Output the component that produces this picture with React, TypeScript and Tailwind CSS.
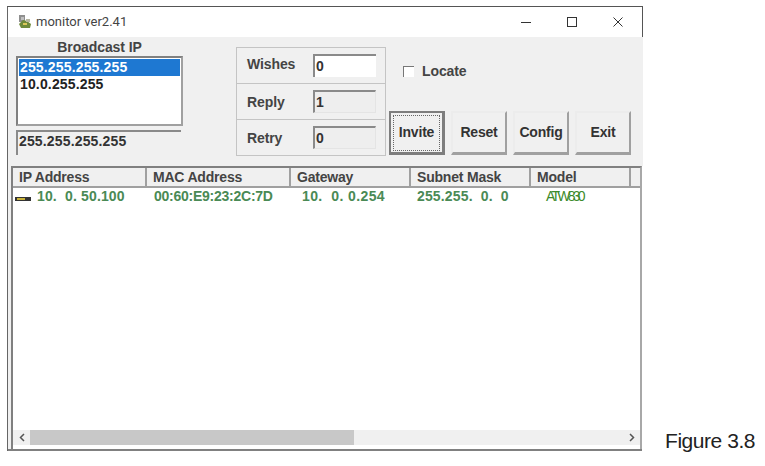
const F = "font-['Liberation_Sans',sans-serif]";

function Btn({ label, def }: { label: string; def?: boolean }) {
  return (
    <div className={`w-[56px] h-[44px] flex items-center justify-center bg-[#f0f0f0] text-[14px] tracking-[-0.2px] font-bold text-[#333] ${def ? "border-2 border-[#7d7d7d] border-b-[3px] border-r-[3px]" : "border-t-2 border-l-2 border-t-[#ececec] border-l-[#ececec] border-r-2 border-b-[3px] border-r-[#a0a0a0] border-b-[#a0a0a0]"}`}>
      {def ? <div className="w-[47px] h-[36px] flex items-center justify-center border border-dotted border-[#666]">{label}</div> : label}
    </div>
  );
}

function Row({ label, value, white, h, lab }: { label: string; value: string; white?: boolean; h: string; lab: string }) {
  return (
    <div className={`${h} flex items-center pl-[10px] border-b border-[#c4c4c4] last:border-b-0`}>
      <div className={`w-[66px] text-[14px] font-bold text-[#444] tracking-[-0.1px] ${lab}`}>{label}</div>
      <div className={`w-[63px] h-[23px] flex items-center border-t-2 border-l-2 border-t-[#8a8a8a] border-l-[#8a8a8a] text-[14px] font-bold text-[#333] pl-[1px] ${white ? "bg-white" : "bg-[#eeeeee] border-r border-b border-r-[#e4e4e4] border-b-[#e4e4e4]"}`}>
        {value}
      </div>
    </div>
  );
}

const cols = [
  { t: "IP Address", w: 134 },
  { t: "MAC Address", w: 144 },
  { t: "Gateway", w: 120 },
  { t: "Subnet Mask", w: 120 },
  { t: "Model", w: 100 },
];

export default function App() {
  return (
    <div className={`w-[765px] h-[466px] bg-white overflow-hidden pt-[6px] pl-[7px] flex ${F}`}>
      <div className="w-[636px] h-[445px] flex flex-col border-t border-l border-t-[#555] border-l-[#666]">
        <div className="h-[30px] shrink-0 bg-white flex items-center pl-[10px] border-r border-[#555]">
          <svg width="14" height="14" viewBox="0 0 14 14" className="mr-[4px]">
            <rect x="1" y="0" width="6" height="7" fill="#8f8f8f" />
            <rect x="3" y="2" width="3" height="3" fill="#c0c0c0" />
            <path d="M1 9L5 5L9 6L13 9L12 13L3 13Z" fill="#6f8a3a" />
            <rect x="5" y="8" width="4" height="2" fill="#dcc85a" />
            <rect x="8" y="4" width="4" height="3" fill="#b8b8a0" />
          </svg>
          <span className="text-[13px] text-[#444] font-['Roboto',sans-serif]">monitor ver2.41</span>
          <div className="ml-auto flex items-center mr-[19px] gap-[36px]">
            <svg width="10" height="10" viewBox="0 0 10 10"><path d="M0 5.5H10" stroke="#333" strokeWidth="1" /></svg>
            <svg width="10" height="10" viewBox="0 0 10 10"><rect x="0.5" y="0.5" width="9" height="9" fill="none" stroke="#333" strokeWidth="1" /></svg>
            <svg width="10" height="10" viewBox="0 0 10 10"><path d="M0.5 0.5L9.5 9.5M9.5 0.5L0.5 9.5" stroke="#333" strokeWidth="1" /></svg>
          </div>
        </div>
        <div className="h-[129px] shrink-0 flex bg-[#f0f0f0]">
          <div className="w-[228px] shrink-0 pl-[8px] flex flex-col">
            <div className="w-[167px] h-[19px] flex items-end justify-center text-[14px] font-bold text-[#444] tracking-[-0.1px] leading-[17px]">Broadcast IP</div>
            <div className="w-[167px] h-[70px] bg-white border-t-2 border-l-2 border-t-[#808080] border-l-[#808080] border-r-2 border-b-2 border-r-[#a0a0a0] border-b-[#a0a0a0] p-[1px] text-[14px] font-bold leading-[17px] tracking-[0.15px]">
              <div className="bg-[#1e78d2] text-white h-[17px] pl-[1px]">255.255.255.255</div>
              <div className="text-[#222] h-[17px] pl-[1px]">10.0.255.255</div>
            </div>
            <div className="w-[165px] h-[25px] mt-[4px] flex items-center pb-[4px] border-t-2 border-l-2 border-t-[#8a8a8a] border-l-[#8a8a8a] pl-[1px] text-[14px] font-bold text-[#333] tracking-[0.15px]">255.255.255.255</div>
          </div>
          <div className="w-[150px] h-[109px] mt-[10px] shrink-0 border border-[#c4c4c4] flex flex-col">
            <Row label="Wishes" value="0" white h="h-[36px]" lab="pb-[2px]" />
            <Row label="Reply" value="1" h="h-[36px]" lab="pt-[1px]" />
            <Row label="Retry" value="0" h="h-[35px]" lab="pt-[1px]" />
          </div>
          <div className="flex flex-col pl-[3px]">
            <label className="h-[74px] pt-[26px] pl-[14px] flex items-start gap-[8px] text-[14px] tracking-[-0.1px] font-bold text-[#444] leading-[17px]">
              <span className="w-[11px] h-[11px] mt-[3px] bg-white border-t border-l border-[#777]" />
              Locate
            </label>
            <div className="flex gap-[6px]">
              <Btn label="Invite" def />
              <Btn label="Reset" />
              <Btn label="Config" />
              <Btn label="Exit" />
            </div>
          </div>
        </div>
        <div className="w-[634px] flex-1 min-h-0 bg-[#f0f0f0] pl-[3px] border-b-2 border-b-[#808080]">
          <div className="w-[631px] h-full flex flex-col border-t-2 border-l-2 border-t-[#808080] border-l-[#808080] border-r-2 border-r-[#a8a8a8] bg-white pb-[4px]">
            <div className="h-[20px] shrink-0 flex bg-[#f0f0f0] border-b-2 border-[#a0a0a0] text-[14px] tracking-[-0.2px] font-bold text-[#444] leading-[19px]">
              {cols.map((c) => (
                <div key={c.t} style={{ width: c.w }} className="shrink-0 pl-[6px] border-r-2 border-[#a0a0a0]">{c.t}</div>
              ))}
            </div>
            <div className="h-[17px] shrink-0 flex items-center text-[14px] font-bold text-[#4a8a55] tracking-[0.15px] whitespace-pre">
              <div className="w-[134px] shrink-0 flex items-center pl-[2px]">
                <svg width="16" height="4" viewBox="0 0 16 4" className="mr-[6px] mt-[4px]"><rect width="16" height="4" fill="#333" /><rect x="2" y="1" width="8" height="2" fill="#c9b33a" /></svg>
                10.  0. 50.100
              </div>
              <div className="w-[144px] shrink-0 pl-[7px] tracking-[-0.25px]">00:60:E9:23:2C:7D</div>
              <div className="w-[120px] shrink-0 pl-[11px] tracking-[0.4px]">10.  0. 0.254</div>
              <div className="w-[120px] shrink-0 pl-[6px]">255.255.  0.  0</div>
              <div className="pl-[15px] font-normal tracking-[-2.8px] text-[#3b8a2a]">ATW830</div>
            </div>
            <div className="flex-1 min-h-0" />
            <div className="h-[15px] shrink-0 flex items-stretch bg-[#f0f0f0]">
              <div className="w-[17px] flex items-center justify-center">
                <svg width="6" height="9" viewBox="0 0 6 9"><path d="M5 1L1.5 4.5L5 8" fill="none" stroke="#555" strokeWidth="1.5" /></svg>
              </div>
              <div className="w-[324px] bg-[#c8c8c8]" />
              <div className="flex-1" />
              <div className="w-[16px] flex items-center justify-center">
                <svg width="6" height="9" viewBox="0 0 6 9"><path d="M1 1L4.5 4.5L1 8" fill="none" stroke="#555" strokeWidth="1.5" /></svg>
              </div>
            </div>
          </div>
        </div>
      </div>
      <div className="self-end mb-[13px] ml-[22px] text-[21px] tracking-[-0.45px] text-[#222] leading-[24px] whitespace-nowrap">Figure 3.8</div>
    </div>
  );
}
